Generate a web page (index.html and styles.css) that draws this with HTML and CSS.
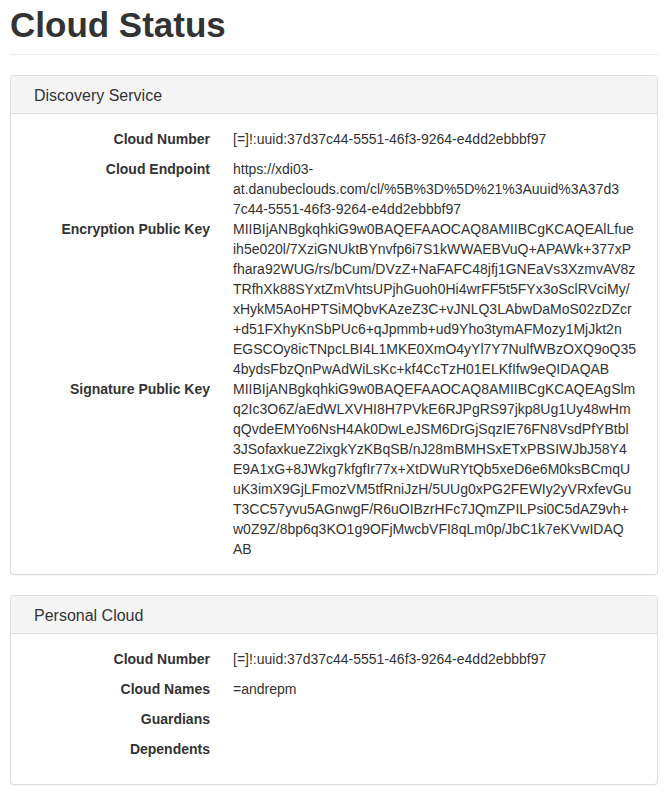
FILE: index.html
```html
<!DOCTYPE html>
<html>
<head>
<meta charset="utf-8">
<title>Cloud Status</title>
<link rel="stylesheet" href="styles.css">
</head>
<body>
<div class="container">
  <div class="page-header">
    <h1 class="title">Cloud Status</h1>
  </div>

  <section class="panel">
    <div class="panel-heading"><h3 class="panel-title">Discovery Service</h3></div>
    <div class="panel-body">
      <dl class="props">
        <div class="row"><dt>Cloud Number</dt><dd>[=]!:uuid:37d37c44-5551-46f3-9264-e4dd2ebbbf97</dd></div>
        <div class="row"><dt>Cloud Endpoint</dt><dd>https://xdi03-<br>at.danubeclouds.com/cl/%5B%3D%5D%21%3Auuid%3A37d3<br>7c44-5551-46f3-9264-e4dd2ebbbf97</dd></div>
        <div class="row"><dt>Encryption Public Key</dt><dd>MIIBIjANBgkqhkiG9w0BAQEFAAOCAQ8AMIIBCgKCAQEAlLfue<br>ih5e020l/7XziGNUktBYnvfp6i7S1kWWAEBVuQ+APAWk+377xP<br>fhara92WUG/rs/bCum/DVzZ+NaFAFC48jfj1GNEaVs3XzmvAV8z<br>TRfhXk88SYxtZmVhtsUPjhGuoh0Hi4wrFF5t5FYx3oSclRVciMy/<br>xHykM5AoHPTSiMQbvKAzeZ3C+vJNLQ3LAbwDaMoS02zDZcr<br>+d51FXhyKnSbPUc6+qJpmmb+ud9Yho3tymAFMozy1MjJkt2n<br>EGSCOy8icTNpcLBI4L1MKE0XmO4yYl7Y7NulfWBzOXQ9oQ35<br>4bydsFbzQnPwAdWiLsKc+kf4CcTzH01ELKfIfw9eQIDAQAB</dd></div>
        <div class="row"><dt>Signature Public Key</dt><dd>MIIBIjANBgkqhkiG9w0BAQEFAAOCAQ8AMIIBCgKCAQEAgSlm<br>q2Ic3O6Z/aEdWLXVHI8H7PVkE6RJPgRS97jkp8Ug1Uy48wHm<br>qQvdeEMYo6NsH4Ak0DwLeJSM6DrGjSqzIE76FN8VsdPfYBtbl<br>3JSofaxkueZ2ixgkYzKBqSB/nJ28mBMHSxETxPBSIWJbJ58Y4<br>E9A1xG+8JWkg7kfgfIr77x+XtDWuRYtQb5xeD6e6M0ksBCmqU<br>uK3imX9GjLFmozVM5tfRniJzH/5UUg0xPG2FEWIy2yVRxfevGu<br>T3CC57yvu5AGnwgF/R6uOIBzrHFc7JQmZPILPsi0C5dAZ9vh+<br>w0Z9Z/8bp6q3KO1g9OFjMwcbVFI8qLm0p/JbC1k7eKVwIDAQ<br>AB</dd></div>
      </dl>
    </div>
  </section>

  <section class="panel">
    <div class="panel-heading"><h3 class="panel-title">Personal Cloud</h3></div>
    <div class="panel-body">
      <dl class="props">
        <div class="row"><dt>Cloud Number</dt><dd>[=]!:uuid:37d37c44-5551-46f3-9264-e4dd2ebbbf97</dd></div>
        <div class="row"><dt>Cloud Names</dt><dd>=andrepm</dd></div>
        <div class="row"><dt>Guardians</dt><dd></dd></div>
        <div class="row"><dt>Dependents</dt><dd></dd></div>
      </dl>
    </div>
  </section>
</div>
</body>
</html>
```

FILE: styles.css
```css
html, body {
  margin: 0;
  padding: 0;
  background: #fff;
}

body {
  font-family: "Liberation Sans", Arial, Helvetica, sans-serif;
  font-size: 14px;
  line-height: 20px;
  color: #333;
}

.container {
  padding: 5px 10px 0 10px;
}

.page-header {
  padding-bottom: 9px;
  border-bottom: 1px solid #eee;
  margin-bottom: 20px;
}

.title {
  margin: 0;
  font-size: 35px;
  line-height: 40px;
  font-weight: 700;
  color: #333;
}

.panel {
  border: 1px solid #ddd;
  border-radius: 4px;
  box-shadow: 0 1px 1px rgba(0, 0, 0, 0.05);
  margin-bottom: 20px;
  background: #fff;
}

.panel-heading {
  background: #f5f5f5;
  border-bottom: 1px solid #ddd;
  border-radius: 3px 3px 0 0;
  padding: 11px 23px 9px 23px;
}

.panel-title {
  margin: 0;
  font-size: 16px;
  line-height: 17px;
  font-weight: 400;
  color: #333;
}

.panel-body {
  padding: 15px;
}

.props {
  margin: 0;
  display: flex;
  flex-direction: column;
}

.row {
  display: grid;
  grid-template-columns: 184px 1fr;
  column-gap: 23px;
  min-height: 30px;
}

.row dt {
  font-weight: 700;
  text-align: right;
  white-space: nowrap;
}

.row dd {
  margin: 0;
  white-space: nowrap;
}
```
